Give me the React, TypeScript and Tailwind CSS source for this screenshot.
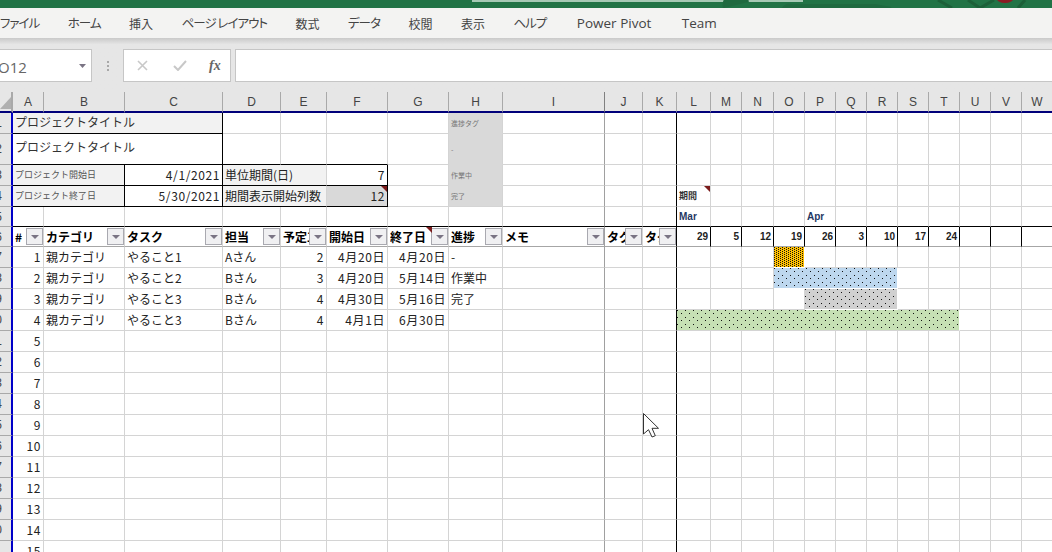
import React from "react";

const JP = "font-['Noto_Sans_CJK_JP',sans-serif]";

const COLS = ["A","B","C","D","E","F","G","H","I","J","K","L","M","N","O","P","Q","R","S","T","U","V","W"];

const rColor: Record<string,string> = {
  g: "border-r-[#d4d4d4]",
  k: "border-r-black",
  d: "border-r-[#a0a0a0]",
  t: "border-r-transparent",
};
const bColor: Record<string,string> = {
  g: "border-b-[#d4d4d4]",
  k: "border-b-black",
  d: "border-b-[#a6a6a6]",
  t: "border-b-transparent",
};

function Cell({ span = 1, r = "g", b = "g", className = "", children }: { span?: number; r?: string; b?: string; className?: string; children?: React.ReactNode }) {
  return (
    <div
      style={{ gridColumn: `span ${span}` }}
      className={`relative flex items-center overflow-hidden whitespace-nowrap border-r border-b min-w-0 ${rColor[r]} ${bColor[b]} ${className}`}
    >
      {children}
    </div>
  );
}

function Corner() {
  return (
    <svg className="absolute right-0 top-0" width="6" height="6" viewBox="0 0 6 6">
      <polygon points="0,0 6,0 6,6" fill="#7b1c1c" />
    </svg>
  );
}

function FilterButton() {
  return (
    <span className="ml-auto flex h-[17px] w-[17px] shrink-0 items-center justify-center border border-[#a9a9b0] bg-[#f0f0f2]">
      <svg width="8" height="4" viewBox="0 0 8 4">
        <polygon points="0,0 8,0 4,4" fill="#7a7484" />
      </svg>
    </span>
  );
}

function Head({ text, r = "g", mark }: { text: string; r?: string; mark?: boolean }) {
  return (
    <Cell r={r} b="d" className="pl-[2px] text-[12px] font-bold text-black">
      <span className="min-w-0 flex-1 overflow-hidden">{text}</span>
      {mark && (
        <svg className="absolute right-[16px] top-0" width="6" height="6" viewBox="0 0 6 6">
          <polygon points="0,0 6,0 6,6" fill="#7b1c1c" />
        </svg>
      )}
      <FilterButton />
    </Cell>
  );
}

function Dotted({ id, fill, w, h, dots }: { id: string; fill: string; w: number; h: number; dots: number[][] }) {
  return (
    <svg className="absolute inset-0 h-full w-full" shapeRendering="crispEdges">
      <defs>
        <pattern id={id} width={w} height={h} patternUnits="userSpaceOnUse">
          <rect width={w} height={h} fill={fill} />
          {dots.map(([x, y], i) => (
            <rect key={i} x={x} y={y} width="1" height="1" fill="#111" />
          ))}
        </pattern>
      </defs>
      <rect width="100%" height="100%" fill={`url(#${id})`} />
    </svg>
  );
}

function Blanks({ n, r = "g", b = "g" }: { n: number; r?: string; b?: string }) {
  return (
    <>
      {Array.from({ length: n }, (_, i) => (
        <Cell key={i} r={r} b={b} />
      ))}
    </>
  );
}

function RowHead({ n }: { n: number }) {
  return (
    <div className="flex items-center justify-end overflow-hidden border-r-2 border-b border-r-[#0000c8] border-b-[#a9a9a9] bg-[#e6e6e6] pr-[9px] font-['Liberation_Sans',sans-serif] text-[12px] text-[#444]">
      {n}
    </div>
  );
}

const small = "text-[9px] text-[#555] pl-[2px]";
const tag = "bg-[#d9d9d9] pl-[2px] text-[7px] text-[#777]";
const normal = "pl-[2px] text-[12px] text-[#222]";
const num = "justify-end pr-[2px] text-[12px] tracking-[0.6px] text-[#222]";
const kana = "text-[12.5px] tracking-[-1px]";
const sparse = [[0, 0], [4, 3]];

const rows = [
  ["1", "親カテゴリ", "やること1", "Aさん", "2", "4月20日", "4月20日", "-"],
  ["2", "親カテゴリ", "やること2", "Bさん", "3", "4月20日", "5月14日", "作業中"],
  ["3", "親カテゴリ", "やること3", "Bさん", "4", "4月30日", "5月16日", "完了"],
  ["4", "親カテゴリ", "やること3", "Bさん", "4", "4月1日", "6月30日", ""],
];

function TableLead({ v, n }: { v?: string[]; n: number }) {
  return (
    <>
      <RowHead n={n + 6} />
      <Cell className={num}>{n}</Cell>
      <Cell className={normal}>{v?.[1]}</Cell>
      <Cell className={normal}>{v?.[2]}</Cell>
      <Cell className={normal}>{v?.[3]}</Cell>
      <Cell className={num}>{v?.[4]}</Cell>
      <Cell className={num}>{v?.[5]}</Cell>
      <Cell className={num}>{v?.[6]}</Cell>
      <Cell className={normal}>{v?.[7]}</Cell>
      <Cell r="d" />
      <Cell />
      <Cell r="k" />
    </>
  );
}

export default function App() {
  return (
    <div className={`relative flex h-[552px] w-[1052px] flex-col overflow-hidden bg-white ${JP}`}>
      {/* title bar */}
      <div className="relative h-[8px] shrink-0 bg-[#217346]">
        <div className="absolute left-[472px] top-0 h-[2px] w-[331px] bg-[#a6c9b5]" />
        <svg className="absolute inset-0" width="1052" height="8" viewBox="0 0 1052 8">
          <path d="M724 8a12 12 0 0 1 24-6M783 8a8 8 0 0 1 8-3h84l16 3z" stroke="#1f6a40" strokeWidth="2" fill="#1f6a40" />
          <path d="M938 0l14 8M968 0l12 8 14-8M1018 8l7-8" stroke="#1c6039" strokeWidth="3" fill="none" />
          <ellipse cx="1005" cy="-1" rx="8" ry="4" fill="#8a1c24" />
        </svg>
      </div>

      {/* ribbon tabs */}
      <div className="flex h-[30px] shrink-0 items-center gap-[28.5px] bg-[#f3f3f2] pt-[1px] text-[12px] text-[#444] [font-feature-settings:'palt']">
        <span className={kana}>ファイル</span>
        <span className={kana}>ホーム</span>
        <span>挿入</span>
        <span className={kana}>ページ レイアウト</span>
        <span>数式</span>
        <span className={kana}>データ</span>
        <span>校閲</span>
        <span>表示</span>
        <span className={kana}>ヘルプ</span>
        <span className="ml-[2px] font-['Open_Sans',sans-serif] text-[13.5px]">Power Pivot</span>
        <span className="ml-[2px] font-['Open_Sans',sans-serif] text-[13.5px]">Team</span>
      </div>

      {/* formula bar */}
      <div className="flex h-[54px] shrink-0 bg-gradient-to-b from-[#c9c9c9] from-0% to-[#e6e6e6] to-[12%] pt-[11px] pb-[10px]">
        <div className="flex h-[33px] w-[92px] shrink-0 items-center justify-between border border-l-0 border-[#c6c6c6] bg-white pr-[5px]">
          <span className="-ml-[2px] mt-[3px] font-['Open_Sans',sans-serif] text-[15px] text-[#666]">O12</span>
          <svg width="7" height="4" viewBox="0 0 7 4"><polygon points="0,0 7,0 3.5,4" fill="#7a7484" /></svg>
        </div>
        <div className="flex w-[31px] shrink-0 flex-col items-center justify-center gap-[2px]">
          <span className="h-[2px] w-[2px] bg-[#a8a8a8]" />
          <span className="h-[2px] w-[2px] bg-[#a8a8a8]" />
          <span className="h-[2px] w-[2px] bg-[#a8a8a8]" />
        </div>
        <div className="flex h-[33px] w-[108px] shrink-0 items-center border border-[#c6c6c6] bg-white pl-[13px]">
          <svg width="11" height="11" viewBox="0 0 11 11"><path d="M1 1l9 9M10 1l-9 9" stroke="#c8c8c8" strokeWidth="1.6" fill="none" /></svg>
          <svg className="ml-[25px]" width="14" height="11" viewBox="0 0 14 11"><path d="M1 6l4 4 8-9" stroke="#c8c8c8" strokeWidth="2" fill="none" /></svg>
          <span className="ml-[22px] font-['Liberation_Serif',serif] text-[14px] font-bold italic text-[#666]">fx</span>
        </div>
        <div className="ml-[4px] h-[33px] flex-1 border border-r-0 border-[#c6c6c6] bg-white" />
      </div>

      {/* sheet */}
      <div className="grid min-h-0 flex-1 grid-cols-[13px_31px_81px_98px_58px_46px_61px_61px_54px_102px_38px_34px_34px_31px_32px_31px_31px_31px_31px_31px_31px_31px_31px_31px] grid-rows-[21px_21px_31px_21px_21px_20px_20px_repeat(16,21px)] overflow-hidden text-[12px]">
        {/* column headers */}
        <div className="border-r-2 border-b-2 border-r-[#a9a9a9] border-b-[#00007a] bg-[#e6e6e6]">
          <svg width="11" height="19" viewBox="0 0 11 19"><polygon points="11,5 11,17 0,17" fill="#b0b0b0" /></svg>
        </div>
        {COLS.map((c) => (
          <div key={c} className={`flex items-center justify-center border-r border-b-2 border-b-[#00007a] bg-[#e6e6e6] pt-[1px] font-['Liberation_Sans',sans-serif] text-[12px] text-[#444] ${c === "I" ? "border-r-[#808080]" : "border-r-[#a9a9a9]"}`}>
            {c}
          </div>
        ))}

        {/* row 1 */}
        <RowHead n={1} />
        <Cell span={3} r="k" b="k" className="bg-[#f2f2f2] pb-[2px] pl-[2px] text-[12px] text-[#333]">プロジェクトタイトル</Cell>
        <Blanks n={4} />
        <Cell b="t" className={tag}>進捗タグ</Cell>
        <Cell r="d" /><Cell /><Cell r="k" /><Blanks n={12} />

        {/* row 2 */}
        <RowHead n={2} />
        <Cell span={3} r="k" b="k" className="pb-[4px] pl-[2px] text-[12px] text-[#333]">プロジェクトタイトル</Cell>
        <Cell b="k" /><Cell b="k" /><Cell b="k" /><Cell />
        <Cell b="t" className={tag}>-</Cell>
        <Cell r="d" /><Cell /><Cell r="k" /><Blanks n={12} />

        {/* row 3 */}
        <RowHead n={3} />
        <Cell span={2} r="k" b="k" className={`bg-[#f2f2f2] ${small}`}>プロジェクト開始日</Cell>
        <Cell r="k" b="k" className={num}>4/1/2021</Cell>
        <Cell span={2} b="k" className="bg-[#f2f2f2] pl-[2px] text-[12px] text-[#222]">単位期間(日)</Cell>
        <Cell r="k" b="k" className={num}>7</Cell>
        <Cell />
        <Cell b="t" className={tag}>作業中</Cell>
        <Cell r="d" /><Cell /><Cell r="k" /><Blanks n={12} />

        {/* row 4 */}
        <RowHead n={4} />
        <Cell span={2} r="k" b="k" className={`bg-[#f2f2f2] ${small}`}>プロジェクト終了日</Cell>
        <Cell r="k" b="k" className={num}>5/30/2021</Cell>
        <Cell span={2} b="k" className="bg-[#f2f2f2] pl-[2px] text-[12px] text-[#222]">期間表示開始列数</Cell>
        <Cell r="k" b="k" className={`bg-[#d9d9d9] ${num}`}>12<Corner /></Cell>
        <Cell />
        <Cell className={tag}>完了</Cell>
        <Cell r="d" /><Cell /><Cell r="k" />
        <Cell className="pl-[2px] text-[9px] font-bold text-[#333]">期間<Corner /></Cell>
        <Blanks n={11} />

        {/* row 5 */}
        <RowHead n={5} />
        <Blanks n={8} b="k" />
        <Cell r="d" b="k" /><Cell b="k" /><Cell r="k" b="k" />
        <Cell b="k" className="pl-[2px] font-['Liberation_Sans',sans-serif] text-[10px] font-bold text-[#1f3864]">Mar</Cell>
        <Blanks n={3} b="k" />
        <Cell b="k" className="pl-[2px] font-['Liberation_Sans',sans-serif] text-[10px] font-bold text-[#1f3864]">Apr</Cell>
        <Blanks n={7} b="k" />

        {/* row 6 */}
        <RowHead n={6} />
        <Head text="#" />
        <Head text="カテゴリ" />
        <Head text="タスク" />
        <Head text="担当" />
        <Head text="予定工数" />
        <Head text="開始日" />
        <Head text="終了日" mark />
        <Head text="進捗" />
        <Head text="メモ" r="d" />
        <Head text="タグ1" />
        <Head text="タグ2" r="k" />
        {["29", "5", "12", "19", "26", "3", "10", "17", "24", "", "", ""].map((d, i) => (
          <Cell key={i} r="k" b="d" className="justify-end pr-[2px] font-['Liberation_Sans',sans-serif] text-[10px] font-bold text-[#222]">{d}</Cell>
        ))}

        {/* row 7 */}
        <TableLead v={rows[0]} n={1} />
        <Blanks n={3} />
        <Cell r="t" b="t"><Dotted id="orange" fill="#ffc000" w={4} h={4} dots={[[0, 0], [2, 1], [0, 2], [2, 3]]} /></Cell>
        <Blanks n={8} />

        {/* row 8 */}
        <TableLead v={rows[1]} n={2} />
        <Blanks n={3} />
        <Cell span={4} r="t" b="t"><Dotted id="blue" fill="#bdd7ee" w={8} h={7} dots={sparse} /></Cell>
        <Blanks n={5} />

        {/* row 9 */}
        <TableLead v={rows[2]} n={3} />
        <Blanks n={4} />
        <Cell span={3} r="t" b="t"><Dotted id="grey" fill="#d0d0d0" w={8} h={7} dots={sparse} /></Cell>
        <Blanks n={5} />

        {/* row 10 */}
        <TableLead v={rows[3]} n={4} />
        <Cell span={9} r="t"><Dotted id="green" fill="#c6e0b4" w={8} h={7} dots={sparse} /></Cell>
        <Blanks n={3} />

        {/* rows 11+ */}
        {Array.from({ length: 11 }, (_, i) => (
          <React.Fragment key={i}>
            <TableLead n={i + 5} />
            <Blanks n={12} />
          </React.Fragment>
        ))}
      </div>

      {/* mouse pointer */}
      <svg className="absolute left-[643px] top-[413px]" width="17" height="25" viewBox="0 0 17 25">
        <path d="M.5.5v20.5l5-4.3 3.5 7.3 3.3-1.3-3.3-7.4h6.5z" fill="#fff" stroke="#333" strokeWidth="1" />
      </svg>
    </div>
  );
}
